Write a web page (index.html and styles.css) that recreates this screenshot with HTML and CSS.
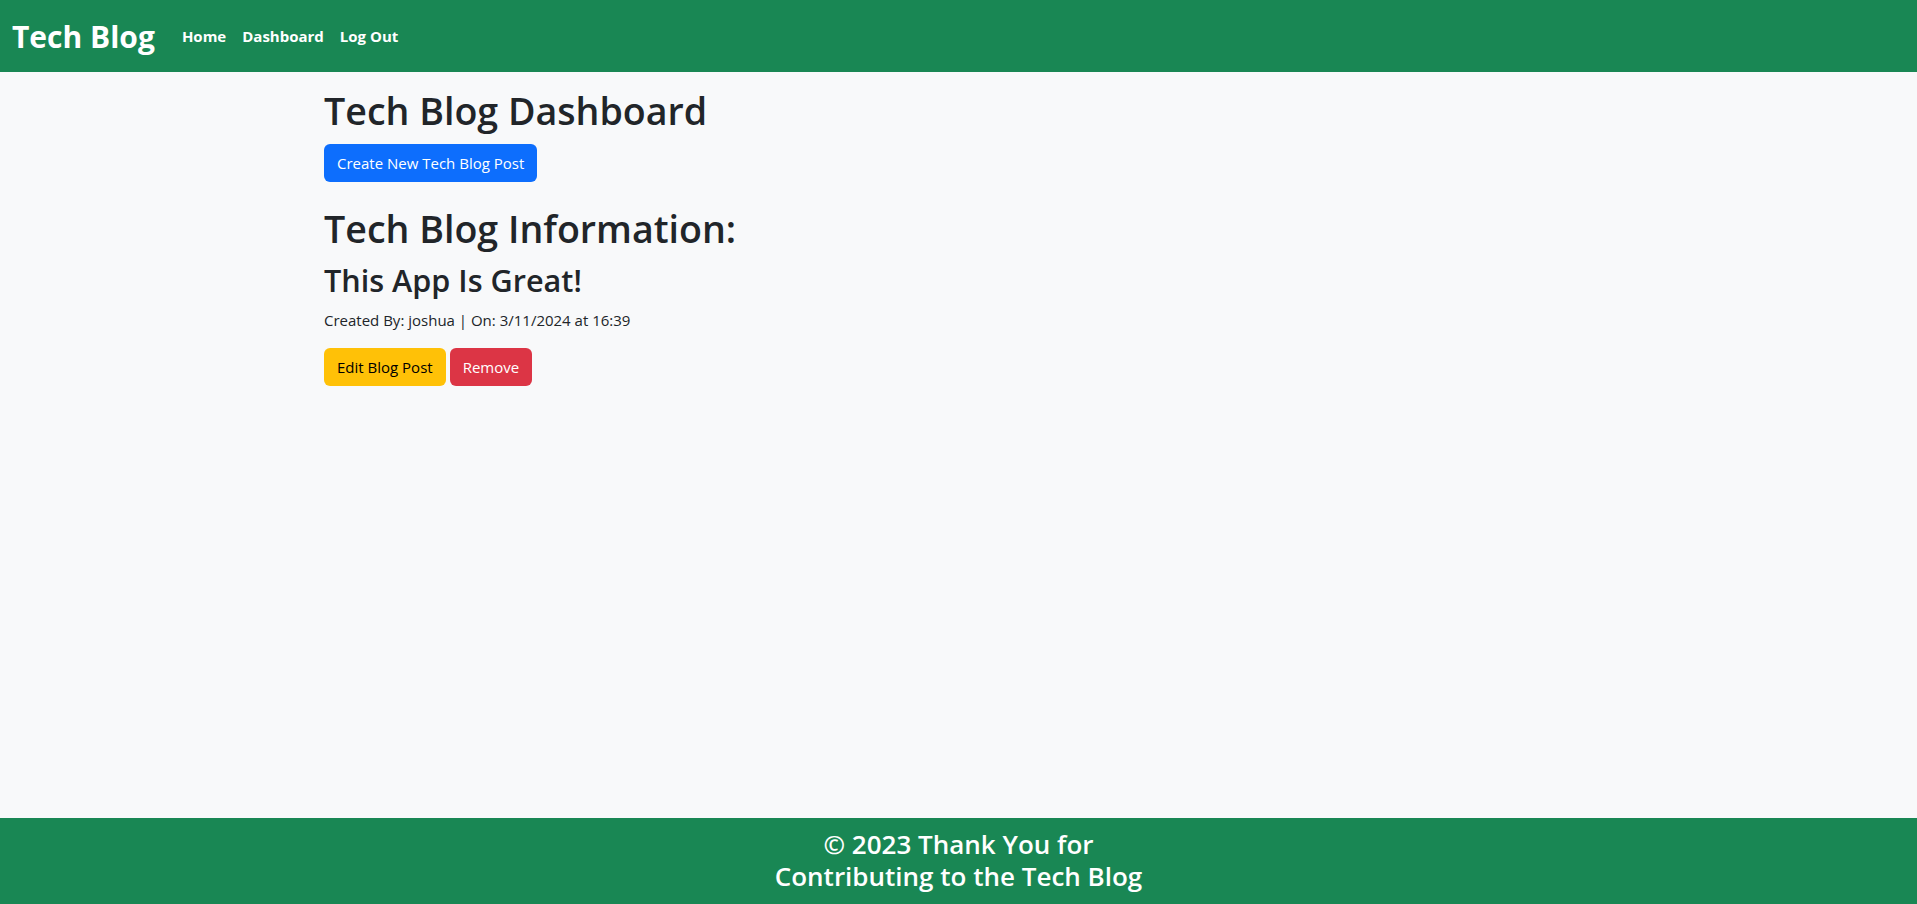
FILE: index.html
```html
<!DOCTYPE html>
<html lang="en">
<head>
<meta charset="utf-8">
<title>Tech Blog</title>
<link rel="stylesheet" href="styles.css">
</head>
<body>
<div class="page">
  <header class="navbar">
    <a class="brand" href="#">Tech Blog</a>
    <nav class="nav">
      <a class="nav-link" href="#">Home</a>
      <a class="nav-link" href="#">Dashboard</a>
      <a class="nav-link" href="#">Log Out</a>
    </nav>
  </header>
  <main class="main">
    <h1 class="title">Tech Blog Dashboard</h1>
    <a class="btn btn-primary" href="#">Create New Tech Blog Post</a>
    <h1 class="title section-title">Tech Blog Information:</h1>
    <article class="post">
      <h2 class="post-title">This App Is Great!</h2>
      <p class="post-meta">Created By: joshua | On: 3/11/2024 at 16:39</p>
      <div class="actions">
        <a class="btn btn-warning" href="#">Edit Blog Post</a>
        <a class="btn btn-danger" href="#">Remove</a>
      </div>
    </article>
  </main>
  <footer class="footer">
    <p class="footer-text">© 2023 Thank You for Contributing to the Tech Blog</p>
  </footer>
</div>
</body>
</html>
```

FILE: styles.css
```css
* { box-sizing: border-box; }
html, body { margin: 0; padding: 0; }
body {
  font-family: "Open Sans", "Noto Sans", sans-serif;
  font-size: 16px;
  line-height: 1.5;
  color: #212529;
  background: #f8f9fa;
}
.page {
  min-height: 100vh;
  display: flex;
  flex-direction: column;
}
.navbar {
  height: 72px;
  background: #198754;
  display: flex;
  align-items: center;
  padding: 0 12px;
}
.brand {
  color: #fff;
  text-decoration: none;
  font-weight: 700;
  font-size: 30px;
  margin-right: 19px;
}
.nav { display: flex; }
.nav-link {
  color: #fff;
  text-decoration: none;
  font-weight: 700;
  font-size: 15px;
  padding: 8px 8px;
}
.main {
  flex: 1;
  padding: 16px 0 0 324px;
}
.title {
  font-size: 37.6px;
  font-weight: 600;
  line-height: 46px;
  margin: 0 0 10px;
}
.section-title { margin-top: 24px; }
.post-title {
  font-size: 30.6px;
  font-weight: 600;
  line-height: 36px;
  margin: 1px 0 10px;
}
.post-meta {
  margin: 0 0 16px;
  font-size: 15px;
  line-height: 24px;
}
.actions { display: flex; gap: 4px; }
.btn {
  display: inline-block;
  font-size: 15px;
  line-height: 24px;
  padding: 6px 12px;
  border: 1px solid transparent;
  border-radius: 6px;
  text-decoration: none;
}
.btn-primary { background: #0d6efd; color: #fff; }
.btn-warning { background: #ffc107; color: #000; }
.btn-danger { background: #dc3545; color: #fff; }
.footer {
  background: #198754;
  color: #fff;
  height: 86px;
  padding-top: 10px;
}
.footer-text {
  width: 400px;
  margin: 0 auto;
  text-align: center;
  font-size: 26px;
  font-weight: 600;
  line-height: 32px;
}
```
